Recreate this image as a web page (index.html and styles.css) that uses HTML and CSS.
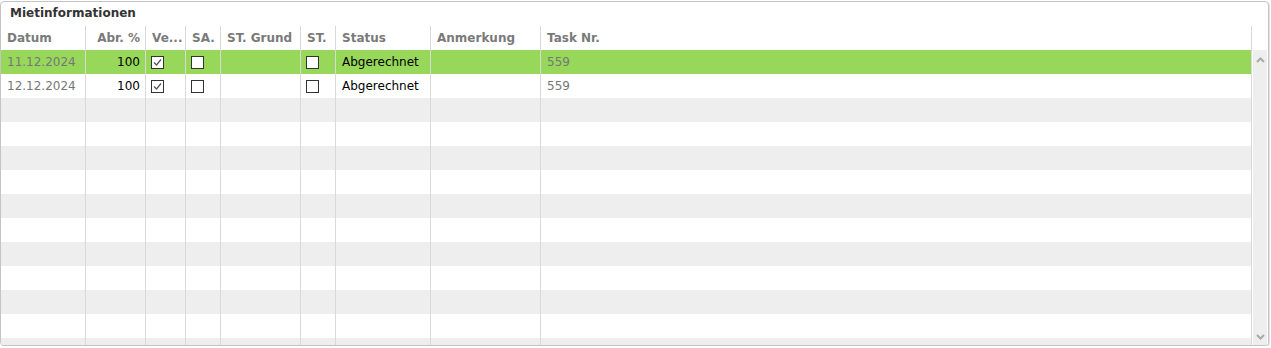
FILE: index.html
```html
<!DOCTYPE html>
<html>
<head>
<meta charset="utf-8">
<link rel="stylesheet" href="styles.css">
</head>
<body>
<div class="panel">
  <div class="title">Mietinformationen</div>
  <div class="head">
    <div class="c">Datum</div>
    <div class="c r">Abr. %</div>
    <div class="c">Ve...</div>
    <div class="c">SA.</div>
    <div class="c">ST. Grund</div>
    <div class="c">ST.</div>
    <div class="c">Status</div>
    <div class="c">Anmerkung</div>
    <div class="c">Task Nr.</div>
    <div class="sp"></div>
  </div>
  <div class="body">
    <div class="rows">
      <div class="row sel">
        <div class="c g">11.12.2024</div>
        <div class="c r">100</div>
        <div class="c cb"><span class="box"><svg viewBox="0 0 11 11" width="11" height="11"><polyline points="2,5.5 4.5,8 9,2.5" fill="none" stroke="#555" stroke-width="1.2"/></svg></span></div>
        <div class="c cb"><span class="box"></span></div>
        <div class="c"></div>
        <div class="c cb"><span class="box"></span></div>
        <div class="c">Abgerechnet</div>
        <div class="c"></div>
        <div class="c g">559</div>
      </div>
      <div class="row">
        <div class="c g">12.12.2024</div>
        <div class="c r">100</div>
        <div class="c cb"><span class="box"><svg viewBox="0 0 11 11" width="11" height="11"><polyline points="2,5.5 4.5,8 9,2.5" fill="none" stroke="#555" stroke-width="1.2"/></svg></span></div>
        <div class="c cb"><span class="box"></span></div>
        <div class="c"></div>
        <div class="c cb"><span class="box"></span></div>
        <div class="c">Abgerechnet</div>
        <div class="c"></div>
        <div class="c g">559</div>
      </div>
      <div class="row alt"><div class="c"></div><div class="c"></div><div class="c"></div><div class="c"></div><div class="c"></div><div class="c"></div><div class="c"></div><div class="c"></div><div class="c"></div></div>
      <div class="row"><div class="c"></div><div class="c"></div><div class="c"></div><div class="c"></div><div class="c"></div><div class="c"></div><div class="c"></div><div class="c"></div><div class="c"></div></div>
      <div class="row alt"><div class="c"></div><div class="c"></div><div class="c"></div><div class="c"></div><div class="c"></div><div class="c"></div><div class="c"></div><div class="c"></div><div class="c"></div></div>
      <div class="row"><div class="c"></div><div class="c"></div><div class="c"></div><div class="c"></div><div class="c"></div><div class="c"></div><div class="c"></div><div class="c"></div><div class="c"></div></div>
      <div class="row alt"><div class="c"></div><div class="c"></div><div class="c"></div><div class="c"></div><div class="c"></div><div class="c"></div><div class="c"></div><div class="c"></div><div class="c"></div></div>
      <div class="row"><div class="c"></div><div class="c"></div><div class="c"></div><div class="c"></div><div class="c"></div><div class="c"></div><div class="c"></div><div class="c"></div><div class="c"></div></div>
      <div class="row alt"><div class="c"></div><div class="c"></div><div class="c"></div><div class="c"></div><div class="c"></div><div class="c"></div><div class="c"></div><div class="c"></div><div class="c"></div></div>
      <div class="row"><div class="c"></div><div class="c"></div><div class="c"></div><div class="c"></div><div class="c"></div><div class="c"></div><div class="c"></div><div class="c"></div><div class="c"></div></div>
      <div class="row alt"><div class="c"></div><div class="c"></div><div class="c"></div><div class="c"></div><div class="c"></div><div class="c"></div><div class="c"></div><div class="c"></div><div class="c"></div></div>
      <div class="row"><div class="c"></div><div class="c"></div><div class="c"></div><div class="c"></div><div class="c"></div><div class="c"></div><div class="c"></div><div class="c"></div><div class="c"></div></div>
      <div class="row alt"><div class="c"></div><div class="c"></div><div class="c"></div><div class="c"></div><div class="c"></div><div class="c"></div><div class="c"></div><div class="c"></div><div class="c"></div></div>
    </div>
    <div class="scroll">
      <svg class="arr" viewBox="0 0 9 6" width="9" height="6"><polyline points="1,5 4.5,1.5 8,5" fill="none" stroke="#aaa" stroke-width="2"/></svg>
      <svg class="arr" viewBox="0 0 9 6" width="9" height="6"><polyline points="1,1 4.5,4.5 8,1" fill="none" stroke="#aaa" stroke-width="2"/></svg>
    </div>
  </div>
</div>
</body>
</html>
```
FILE: styles.css
```css
html, body {
  margin: 0;
  padding: 0;
  background: #fff;
}
body {
  font-family: "DejaVu Sans", Verdana, sans-serif;
  font-size: 12px;
  color: #000;
}
.panel {
  margin: 1px 0 0 0;
  width: 1267px;
  height: 343px;
  border: 1px solid #c4c4c4;
  border-radius: 4px;
  box-shadow: 1px 1px 0 #e2e2e2;
  display: flex;
  flex-direction: column;
  overflow: hidden;
  background: #fff;
}
.title {
  height: 24px;
  line-height: 22px;
  padding-left: 9px;
  font-weight: bold;
  color: #333;
  flex: none;
}
.head, .row {
  display: grid;
  grid-template-columns: 85px 60px 40px 35px 80px 35px 95px 110px 711px;
}
.head {
  grid-template-columns: 85px 60px 40px 35px 80px 35px 95px 110px 711px 15px;
  height: 24px;
  flex: none;
}
.head .c {
  font-weight: bold;
  color: #7a7a7a;
  line-height: 24px;
}
.c {
  border-right: 1px solid #d9d9d9;
  padding: 0 0 0 6px;
  height: 24px;
  line-height: 24px;
  white-space: nowrap;
  overflow: hidden;
}
.r {
  text-align: right;
  padding: 0 5px 0 0;
}
.g {
  color: #777;
}
.cb {
  padding-left: 5px;
  display: flex;
  align-items: center;
}
.box {
  width: 11px;
  height: 11px;
  border: 1px solid #333;
  background: #fff;
  display: flex;
}
.body {
  flex: 1;
  display: flex;
  min-height: 0;
}
.rows {
  flex: none;
  width: 1251px;
  overflow: hidden;
}
.row {
  height: 24px;
}
.row.alt {
  background: #eeeeee;
}
.row.sel {
  background: #97d75a;
}
.scroll {
  flex: none;
  width: 14px;
  margin-left: 1px;
  background: #eeeeee;
  border-right: 1px solid #fff;
  display: flex;
  flex-direction: column;
  justify-content: space-between;
  align-items: center;
  padding: 7px 0 5px;
}
.arr {
  display: block;
}
```
